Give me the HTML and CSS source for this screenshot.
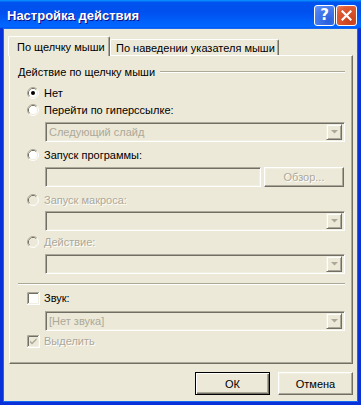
FILE: index.html
```html
<!DOCTYPE html>
<html lang="ru">
<head>
  <meta charset="UTF-8" />
  <title>Настройка действия</title>
  <link rel="stylesheet" href="styles.css">
</head>
<body>
  <div class="window">
    <div class="titlebar">
      <span class="title">Настройка действия</span>
      <div class="title-buttons">
        <span class="tb-btn help">?</span>
        <span class="tb-btn close">
          <svg width="11" height="11" viewBox="0 0 11 11"><path d="M1.5 1.5 L9.5 9.5 M9.5 1.5 L1.5 9.5" stroke="#fff" stroke-width="2.2" stroke-linecap="square"/></svg>
        </span>
      </div>
    </div>

    <div class="window-body">
      <div class="tabs">
        <div class="tab active">По щелчку мыши</div>
        <div class="tab">По наведении указателя мыши</div>
      </div>

      <div class="panel">
        <div class="group-title">Действие по щелчку мыши</div>

        <label class="option first">
          <svg class="radio" width="12" height="12" viewBox="0 0 12 12">
            <path d="M2.11 9.89 A5.5 5.5 0 0 1 9.89 2.11" stroke="#aca899" fill="none"/>
            <path d="M9.89 2.11 A5.5 5.5 0 0 1 2.11 9.89" stroke="#fff" fill="none"/>
            <path d="M2.82 9.18 A4.5 4.5 0 0 1 9.18 2.82" stroke="#716f64" fill="none"/>
            <path d="M9.18 2.82 A4.5 4.5 0 0 1 2.82 9.18" stroke="#f1efe2" fill="none"/>
            <circle cx="6" cy="6" r="4" fill="#fff"/>
            <circle cx="6" cy="6" r="2" fill="#000"/>
          </svg>
          Нет
        </label>

        <label class="option tight">
          <svg class="radio" width="12" height="12" viewBox="0 0 12 12">
            <path d="M2.11 9.89 A5.5 5.5 0 0 1 9.89 2.11" stroke="#aca899" fill="none"/>
            <path d="M9.89 2.11 A5.5 5.5 0 0 1 2.11 9.89" stroke="#fff" fill="none"/>
            <path d="M2.82 9.18 A4.5 4.5 0 0 1 9.18 2.82" stroke="#716f64" fill="none"/>
            <path d="M9.18 2.82 A4.5 4.5 0 0 1 2.82 9.18" stroke="#f1efe2" fill="none"/>
            <circle cx="6" cy="6" r="4" fill="#fff"/>
          </svg>
          Перейти по гиперссылке:
        </label>
        <div class="field combo">
          <span class="combo-text">Следующий слайд</span>
          <span class="drop-btn"><svg width="7" height="4" viewBox="0 0 7 4"><path d="M0 0 H7 L3.5 3.5 Z" fill="#aca899"/></svg></span>
        </div>

        <label class="option">
          <svg class="radio" width="12" height="12" viewBox="0 0 12 12">
            <path d="M2.11 9.89 A5.5 5.5 0 0 1 9.89 2.11" stroke="#aca899" fill="none"/>
            <path d="M9.89 2.11 A5.5 5.5 0 0 1 2.11 9.89" stroke="#fff" fill="none"/>
            <path d="M2.82 9.18 A4.5 4.5 0 0 1 9.18 2.82" stroke="#716f64" fill="none"/>
            <path d="M9.18 2.82 A4.5 4.5 0 0 1 2.82 9.18" stroke="#f1efe2" fill="none"/>
            <circle cx="6" cy="6" r="4" fill="#fff"/>
          </svg>
          Запуск программы:
        </label>
        <div class="field program-row">
          <span class="textbox"></span>
          <span class="button small disabled">Обзор...</span>
        </div>

        <label class="option disabled">
          <svg class="radio" width="12" height="12" viewBox="0 0 12 12">
            <path d="M2.11 9.89 A5.5 5.5 0 0 1 9.89 2.11" stroke="#aca899" fill="none"/>
            <path d="M9.89 2.11 A5.5 5.5 0 0 1 2.11 9.89" stroke="#fff" fill="none"/>
            <path d="M2.82 9.18 A4.5 4.5 0 0 1 9.18 2.82" stroke="#716f64" fill="none"/>
            <path d="M9.18 2.82 A4.5 4.5 0 0 1 2.82 9.18" stroke="#f1efe2" fill="none"/>
            <circle cx="6" cy="6" r="4" fill="#ece9d8"/>
          </svg>
          Запуск макроса:
        </label>
        <div class="field combo near">
          <span class="combo-text"></span>
          <span class="drop-btn"><svg width="7" height="4" viewBox="0 0 7 4"><path d="M0 0 H7 L3.5 3.5 Z" fill="#aca899"/></svg></span>
        </div>

        <label class="option disabled near">
          <svg class="radio" width="12" height="12" viewBox="0 0 12 12">
            <path d="M2.11 9.89 A5.5 5.5 0 0 1 9.89 2.11" stroke="#aca899" fill="none"/>
            <path d="M9.89 2.11 A5.5 5.5 0 0 1 2.11 9.89" stroke="#fff" fill="none"/>
            <path d="M2.82 9.18 A4.5 4.5 0 0 1 9.18 2.82" stroke="#716f64" fill="none"/>
            <path d="M9.18 2.82 A4.5 4.5 0 0 1 2.82 9.18" stroke="#f1efe2" fill="none"/>
            <circle cx="6" cy="6" r="4" fill="#ece9d8"/>
          </svg>
          Действие:
        </label>
        <div class="field combo">
          <span class="combo-text"></span>
          <span class="drop-btn"><svg width="7" height="4" viewBox="0 0 7 4"><path d="M0 0 H7 L3.5 3.5 Z" fill="#aca899"/></svg></span>
        </div>

        <div class="separator"></div>

        <label class="option">
          <svg class="check" width="13" height="13" viewBox="0 0 13 13">
            <rect x="0" y="0" width="13" height="13" fill="#fff"/>
            <path d="M0.5 12 V0.5 H12" stroke="#aca899" fill="none"/>
            <path d="M1.5 11 V1.5 H11" stroke="#716f64" fill="none"/>
            <path d="M1.5 11.5 H11.5 V1.5" stroke="#f1efe2" fill="none"/>
          </svg>
          Звук:
        </label>
        <div class="field combo loose">
          <span class="combo-text">[Нет звука]</span>
          <span class="drop-btn"><svg width="7" height="4" viewBox="0 0 7 4"><path d="M0 0 H7 L3.5 3.5 Z" fill="#aca899"/></svg></span>
        </div>

        <label class="option disabled last">
          <svg class="check" width="13" height="13" viewBox="0 0 13 13">
            <rect x="0" y="0" width="13" height="13" fill="#fff"/>
            <rect x="2" y="2" width="9" height="9" fill="#ece9d8"/>
            <path d="M0.5 12 V0.5 H12" stroke="#aca899" fill="none"/>
            <path d="M1.5 11 V1.5 H11" stroke="#716f64" fill="none"/>
            <path d="M1.5 11.5 H11.5 V1.5" stroke="#f1efe2" fill="none"/>
            <path d="M3 5.5 L5 7.5 L9.5 3 V5 L5 9.5 L3 7.5 Z" fill="#aca899"/>
          </svg>
          Выделить
        </label>
      </div>

      <div class="dialog-buttons">
        <span class="button default">ОК</span>
        <span class="button">Отмена</span>
      </div>
    </div>
  </div>
</body>
</html>
```

FILE: styles.css
```css
* { box-sizing: border-box; margin: 0; padding: 0; }

body {
  font-family: 'Liberation Sans', Arial, sans-serif;
  font-size: 11px;
  color: #000;
  background: #fff;
}

.window {
  width: 361px;
  height: 405px;
  display: flex;
  flex-direction: column;
  background: #0831d9;
}

/* заголовок окна */
.titlebar {
  height: 29px;
  display: flex;
  align-items: center;
  justify-content: space-between;
  padding: 1px 4px 0 7px;
  background: linear-gradient(180deg, #0997ff, #0053ee 8%, #0050ee 40%, #0066ff 88%, #0066ff 93%, #005bff 95%, #003dd7 96%, #003dd7);
}

.title {
  color: #fff;
  font-weight: bold;
  font-size: 13px;
  text-shadow: 1px 1px #0f1089;
}

.title-buttons {
  display: flex;
  gap: 1px;
}

.tb-btn {
  width: 21px;
  height: 21px;
  display: flex;
  align-items: center;
  justify-content: center;
  border: 1px solid #fff;
  border-radius: 3px;
  color: #fff;
  font-family: 'DejaVu Sans', sans-serif;
  font-weight: bold;
  font-size: 15px;
}

.help {
  background: radial-gradient(circle at 70% 80%, #2a5fdc, #4a7ff0 70%, #6d9bf7);
}

.close {
  background: radial-gradient(circle at 70% 80%, #c8401a, #e05a32 70%, #ec8a6a);
}

.window-body {
  flex: 1;
  margin: 0 4px 4px;
  padding: 7px 4px 0;
  background: #ece9d8;
  box-shadow: 0 0 0 1px #166aee;
}

/* вкладки */
.tabs {
  display: flex;
  align-items: flex-end;
}

.tab {
  height: 16px;
  display: flex;
  align-items: center;
  padding: 1px 0 0 5px;
  border: 1px solid #fff;
  border-right-color: #716f64;
  border-bottom: none;
  border-radius: 2px 2px 0 0;
  box-shadow: inset -1px 0 #aca899;
  background: #ece9d8;
  width: 169px;
}

.tab.active {
  position: relative;
  z-index: 1;
  width: 102px;
  height: 20px;
  margin-bottom: -1px;
  padding-left: 8px;
}

.panel {
  height: 309px;
  margin-left: 1px;
  padding: 0 7px 0 8px;
  border: 1px solid #fff;
  border-right-color: #716f64;
  border-bottom-color: #716f64;
  box-shadow: inset -1px -1px #aca899;
  display: flex;
  flex-direction: column;
}

.group-title {
  display: flex;
  align-items: center;
  gap: 5px;
  height: 12px;
  margin-top: 10px;
}

.group-title::after {
  content: '';
  flex: 1;
  border-top: 1px solid #aca899;
  border-bottom: 1px solid #fff;
}

.option {
  display: flex;
  align-items: center;
  gap: 5px;
  height: 16px;
  margin: 5px 0 0 9px;
}

.option .check { margin-right: -1px; }

.option.first { margin-top: 7px; }
.option.tight { margin-top: 1px; }
.option.near { margin-top: 3px; }
.option.last { margin-top: 2px; }

.option.disabled {
  color: #aca899;
  text-shadow: 1px 1px #fff;
}

.field {
  margin: 4px 0 0 27px;
  height: 20px;
}

.field.near { margin-top: 3px; }
.field.loose { margin-top: 5px; }

.combo, .textbox {
  display: flex;
  align-items: center;
  padding: 2px;
  border: 1px solid;
  border-color: #aca899 #fff #fff #aca899;
  box-shadow: inset 1px 1px #716f64, inset -1px -1px #f1efe2;
  background: #ece9d8;
}

.combo-text {
  flex: 1;
  padding-left: 1px;
  color: #aca899;
}

.drop-btn {
  width: 16px;
  height: 16px;
  display: flex;
  align-items: center;
  justify-content: center;
  border: 1px solid;
  border-color: #f1efe2 #716f64 #716f64 #f1efe2;
  box-shadow: inset 1px 1px #fff, inset -1px -1px #aca899;
  background: #ece9d8;
}

.program-row {
  display: flex;
  gap: 3px;
}

.textbox {
  width: 216px;
  height: 20px;
}

.separator {
  margin-top: 9px;
  border-top: 1px solid #aca899;
  border-bottom: 1px solid #fff;
}

/* кнопки */
.button {
  width: 75px;
  height: 23px;
  display: flex;
  align-items: center;
  justify-content: center;
  border: 1px solid;
  border-color: #fff #716f64 #716f64 #fff;
  box-shadow: inset -1px -1px #aca899, inset 1px 1px #f1efe2;
  background: #ece9d8;
}

.button.small {
  width: 80px;
  height: 20px;
}

.button.disabled {
  color: #aca899;
  text-shadow: 1px 1px #fff;
}

.button.default {
  border-color: #000;
  box-shadow: inset 1px 1px #fff, inset -1px -1px #716f64, inset -2px -2px #aca899;
}

.dialog-buttons {
  display: flex;
  justify-content: flex-end;
  gap: 8px;
  margin-top: 8px;
}
```
